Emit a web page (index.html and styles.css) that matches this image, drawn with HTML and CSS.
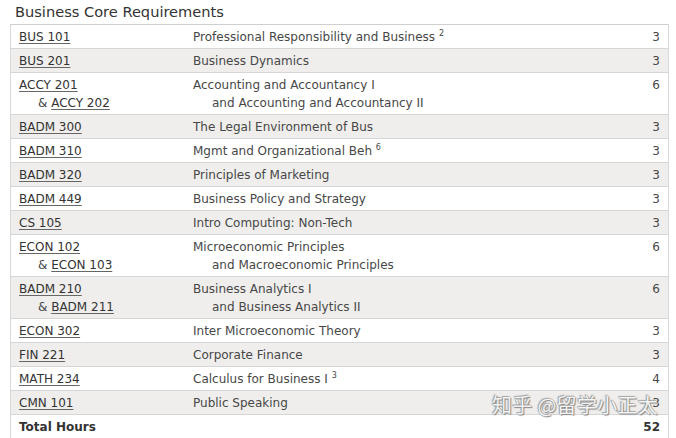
FILE: index.html
```html
<!DOCTYPE html>
<html>
<head>
<meta charset="utf-8">
<link rel="stylesheet" href="styles.css">
</head>
<body>
<div class="page">
  <h3 class="heading">Business Core Requirements</h3>
  <table class="req">
    <tbody>
      <tr class="odd"><td class="code"><a href="#">BUS 101</a></td><td class="title">Professional Responsibility and Business <sup>2</sup></td><td class="hrs">3</td></tr>
      <tr class="even"><td class="code"><a href="#">BUS 201</a></td><td class="title">Business Dynamics</td><td class="hrs">3</td></tr>
      <tr class="odd"><td class="code"><a href="#">ACCY 201</a><div class="sub">&amp; <a href="#">ACCY 202</a></div></td><td class="title">Accounting and Accountancy I<div class="sub">and Accounting and Accountancy II</div></td><td class="hrs">6</td></tr>
      <tr class="even"><td class="code"><a href="#">BADM 300</a></td><td class="title">The Legal Environment of Bus</td><td class="hrs">3</td></tr>
      <tr class="odd"><td class="code"><a href="#">BADM 310</a></td><td class="title">Mgmt and Organizational Beh <sup>6</sup></td><td class="hrs">3</td></tr>
      <tr class="even"><td class="code"><a href="#">BADM 320</a></td><td class="title">Principles of Marketing</td><td class="hrs">3</td></tr>
      <tr class="odd"><td class="code"><a href="#">BADM 449</a></td><td class="title">Business Policy and Strategy</td><td class="hrs">3</td></tr>
      <tr class="even"><td class="code"><a href="#">CS 105</a></td><td class="title">Intro Computing: Non-Tech</td><td class="hrs">3</td></tr>
      <tr class="odd"><td class="code"><a href="#">ECON 102</a><div class="sub">&amp; <a href="#">ECON 103</a></div></td><td class="title">Microeconomic Principles<div class="sub">and Macroeconomic Principles</div></td><td class="hrs">6</td></tr>
      <tr class="even"><td class="code"><a href="#">BADM 210</a><div class="sub">&amp; <a href="#">BADM 211</a></div></td><td class="title">Business Analytics I<div class="sub">and Business Analytics II</div></td><td class="hrs">6</td></tr>
      <tr class="odd"><td class="code"><a href="#">ECON 302</a></td><td class="title">Inter Microeconomic Theory</td><td class="hrs">3</td></tr>
      <tr class="even"><td class="code"><a href="#">FIN 221</a></td><td class="title">Corporate Finance</td><td class="hrs">3</td></tr>
      <tr class="odd"><td class="code"><a href="#">MATH 234</a></td><td class="title">Calculus for Business I <sup>3</sup></td><td class="hrs">4</td></tr>
      <tr class="even"><td class="code"><a href="#">CMN 101</a></td><td class="title">Public Speaking</td><td class="hrs">3</td></tr>
      <tr class="odd total"><td class="code" colspan="2">Total Hours</td><td class="hrs">52</td></tr>
    </tbody>
  </table>
  <div class="watermark">知乎 @留学小正太</div>
</div>
</body>
</html>
```

FILE: styles.css
```css
html, body {
  margin: 0;
  padding: 0;
  background: #fff;
}
.page {
  position: relative;
  width: 676px;
  height: 438px;
  overflow: hidden;
  font-family: "DejaVu Sans", Verdana, sans-serif;
  color: #474747;
}
.heading {
  margin: 0;
  padding: 2px 0 0 15px;
  height: 22px;
  font-size: 14.6px;
  font-weight: normal;
  color: #333;
  line-height: 20px;
}
.req {
  margin-left: 10px;
  width: 659px;
  border-collapse: collapse;
  border-left: 1px solid #d9d9d9;
  border-right: 1px solid #d9d9d9;
  border-top: 1px solid #cfcfcf;
  font-size: 12px;
  line-height: 18px;
}
.req tr {
  border-bottom: 1px solid #d6d6d6;
}
.req tr.even {
  background: #efeeec;
}
.req tr.odd {
  background: #fff;
}
.req td {
  padding: 3px 8px 2px 8px;
  vertical-align: top;
}
.req td.code {
  width: 158px;
}
.req td.hrs {
  text-align: right;
  width: 40px;
}
.req a {
  color: #333;
  text-decoration: underline;
  text-decoration-color: #666;
  text-underline-offset: 2px;
}
.sub {
  padding-left: 19px;
}
sup {
  font-size: 8px;
  line-height: 0;
  vertical-align: 5px;
}
.total td {
  font-weight: bold;
  color: #333;
}
.watermark {
  position: absolute;
  left: 492px;
  top: 393px;
  font-family: "Noto Sans CJK SC", sans-serif;
  font-size: 20px;
  line-height: 24px;
  color: #f4f4f4;
  text-shadow: 0 0 1px #777, 1px 1px 1px #888, -1px -1px 1px #aaa;
  letter-spacing: 0.3px;
}
```
